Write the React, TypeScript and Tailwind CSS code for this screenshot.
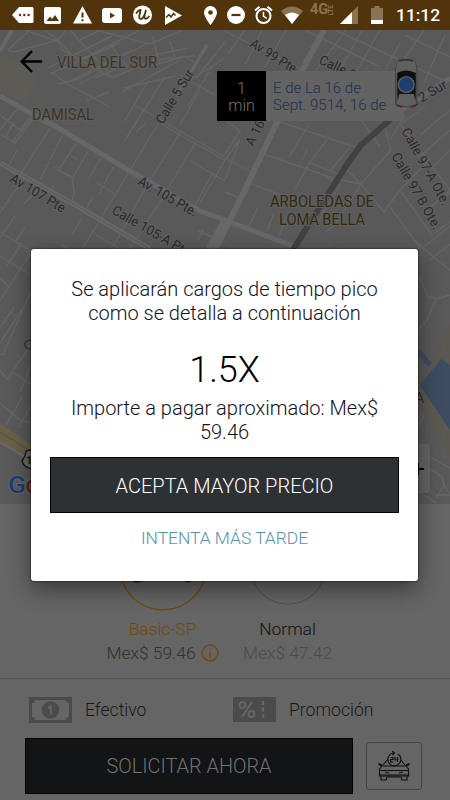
import type { ReactNode } from 'react';

const minorRoads = [
  // upper left
  'M25 30 L60 42 L72 55 L112 78 L135 68 L152 60 L195 56',
  'M45 30 L58 40 L66 30',
  'M30 30 L10 48 L8 51 L14 52 L58 40',
  'M58 40 L62 50 L112 78',
  'M70 30 L112 77',
  'M48 68 L112 36 M72 55 L62 67 M50 74 L120 43',
  'M80 60 L140 30 M100 30 L80 40',
  'M96 30 L150 44 L182 30 M110 44 L128 68',
  'M152 36 L160 64 M170 41 L175 58',
  'M52 72 L66 83 L132 50 M66 83 L110 107',
  'M59 84 L78 79 L150 42 M78 85 L100 73 M86 101 L109 92 M95 78 L118 68',
  'M145 68 L185 56 L194 62 M150 56 L188 48',
  'M124 88 L176 76 M148 81 L124 122 M165 77 L125 140 M122 92 L180 60',
  'M135 105 L225 157 M180 75 L225 101 M190 80 L225 58 M200 90 L180 125',
  'M225 42 L196 78 M213 65 L188 106 M158 122 L180 135 L225 160',
  'M0 115 L20 130 L32 114 M6 137 L14 122 M0 134 L15 143 L34 118',
  'M18 108 L0 130 M35 114 L12 142 M10 100 L60 128',
  'M50 128 L20 175 M62 136 L40 180 M76 144 L58 170 L72 178 L74 192 L72 202',
  'M70 155 L77 159 M88 151 L73 178 M101 158 L88 180 M114 166 L104 184',
  'M53 167 L72 177 M97 183 L115 194 M103 186 L99 194',
  'M158 124 L130 170 L100 220 L82 249 M180 133 L148 183 L118 238 M196 142 L164 195 L130 249',
  'M146 123 L136 132 M190 161 L225 181 M212 174 L192 211 M225 160 L200 203',
  'M0 232 L16 242 L40 256 M17 150 L9 165 M27 173 L0 213 M53 186 L48 196 M37 190 L24 204',
  'M15 216 L0 238 M25 227 L15 242 M93 197 L85 211 M82 218 L72 234',
  'M96 235 L140 260 M100 221 L200 276 M115 244 L120 234 M198 231 L225 242 M203 229 L198 240 M62 245 L72 250',
  // upper right
  'M245 30 L228 54 M262 30 L245 65 M286 30 L265 67 M346 30 L315 72 M362 30 L340 70 M380 30 L355 74',
  'M225 31 L308 73 M305 30 L380 67 M335 30 L445 81 M405 35 L450 57 M424 30 L405 58 M445 35 L424 83 M400 43 L385 70',
  'M405 115 L390 140 M425 106 L400 125 M450 110 L420 135 M450 130 L418 158',
  'M225 120 L240 131 L225 154 M239 140 L225 160 M225 158 L250 171 M240 139 L225 180 M258 152 L336 179 L361 184',
  'M252 184 L325 212 M250 185 L245 195 M225 192 L240 198 M278 121 L355 147 M308 126 L289 157 M307 150 L303 159',
  'M330 136 L310 162 L295 190 M350 147 L330 171 M310 163 L338 174 M325 176 L340 185 L318 222 M258 207 L249 227 M274 213 L267 231 M286 217 L279 237',
  'M385 128 L391 150 L361 184 L384 212 L400 190 L431 158 M400 190 L432 235 M390 207 L421 249 L450 226 M432 235 L450 222',
  'M347 170 L361 184 L335 225 L325 232 M450 190 L425 212 M440 205 L450 192 M400 124 L450 190 M450 150 L425 175',
  'M361 120 L380 147 M370 138 L392 122',
  // strip left of the dialog
  'M0 256 L31 275 M0 278 L8 286 M31 252 L0 301 M22 243 L6 267 M14 308 L0 327',
  'M31 291 L3 355 L0 353 M22 309 L0 343 M0 370 L7 379 L31 345 M12 372 L31 384 M22 397 L6 425 M31 365 L20 392 M0 403 L20 420 L31 423 M31 405 L18 428',
  // strip right of the dialog
  'M414 240 L437 260 L450 270 M450 244 L430 260 M419 275 L428 297 L436 299 L450 295 M436 299 L427 320 L418 330 M424 415 L418 428',
  'M430 457 L450 468 M430 469 L442 477 L444 485 L436 499 M444 485 L450 494 M436 495 L450 495 M419 492 L436 503',
];

const majorRoads = [
  { d: 'M12 30 L0 51', w: 4 },
  { d: 'M0 96 L50 124', w: 5 },
  { d: 'M40 117 L130 171 L200 211 L225 220 L293 246', w: 5 },
  { d: 'M225 220 L205 255', w: 6 },
  { d: 'M324 30 L295 83 L278 120 L252 175 L228 224 L212 255', w: 6 },
  { d: 'M207 45 L180 90', w: 3 },
  { d: 'M450 78 L398 112', w: 5 },
  { d: 'M0 163 L77 206 L150 249', w: 5 },
];

const placeLabels = [
  { text: 'VILLA DEL SUR', x: 57, y: 68, w: 100, color: '#3d331f' },
  { text: 'DAMISAL', x: 32, y: 120, w: 62, color: '#3d331f' },
  { text: 'ARBOLEDAS DE', x: 270, y: 207, w: 104, color: '#33290f' },
  { text: 'LOMA BELLA', x: 279, y: 225, w: 86, color: '#33290f' },
];

const streetLabels = [
  { text: 'Calle 5 Sur', x: 163, y: 125, w: 61, angle: -59 },
  { text: 'Av 99 Pte', x: 249, y: 46, w: 52, angle: 32 },
  { text: 'Calle 9 Sur', x: 318, y: 63, w: 62, angle: 26 },
  { text: 'A 16', x: 253, y: 147, w: 27, angle: -63 },
  { text: '. 2 Sur', x: 416, y: 106, w: 37, angle: -30 },
  { text: 'Av 107 Pte', x: 9, y: 181, w: 62, angle: 31 },
  { text: 'Av. 105 Pte.', x: 137, y: 184, w: 66, angle: 30 },
  { text: 'Calle 105-A Pte', x: 111, y: 213, w: 88, angle: 30 },
  { text: 'Calle 97-A Ote.', x: 401, y: 131, w: 86, angle: 61 },
  { text: 'Calle 97 B Ote.', x: 391, y: 156, w: 86, angle: 60 },
];

function CityMap() {
  return (
    <svg className="block" width="450" height="474" viewBox="0 30 450 474" fontFamily="Roboto, sans-serif">
      <rect y="30" width="450" height="474" fill="#595959" />
      <path d="M0 52 L40 76 L25 104 L0 92 Z" fill="#5c5b56" />
      <path d="M450 325 L428 366 L419 377 L419 405 L450 455 Z" fill="#5b5751" />
      <g fill="none" stroke="#656565" strokeWidth="1.4">
        {minorRoads.map((d) => (
          <path key={d} d={d} />
        ))}
      </g>
      <g fill="none" stroke="#676767">
        {majorRoads.map((r) => (
          <path key={r.d} d={r.d} strokeWidth={r.w} />
        ))}
      </g>
      <path d="M0 163 L77 206 L150 249" stroke="#595959" fill="none" />
      <path d="M391 119 L361 145 L348 163 L316 213 L291 253" stroke="#414141" strokeWidth="6" fill="none" />
      <path d="M318 227 L332 237 L338 249" stroke="#4a5669" fill="none" />
      {/* highway */}
      <path d="M0 423 L32 445 L32 460 L0 441 Z" fill="#686047" />
      <path d="M0 432 L32 452" stroke="#535046" fill="none" />
      <path d="M0 442 L32 461" stroke="#6a6a68" strokeWidth="2" fill="none" />
      {/* water */}
      <path d="M420 385 L441 359 L450 365 L450 430 Z" fill="#3d4c61" />
      <path d="M418 351 L430 365" stroke="#3d4c61" strokeWidth="5" />
      <g fontSize="16">
        {placeLabels.map((l) => (
          <text key={l.text} x={l.x} y={l.y} textLength={l.w} lengthAdjust="spacingAndGlyphs" fill={l.color} stroke="#606060" strokeWidth="2" paintOrder="stroke">
            {l.text}
          </text>
        ))}
      </g>
      <g fontSize="13.5" fill="#292929" stroke="#606060" strokeWidth="2" paintOrder="stroke">
        {streetLabels.map((l) => (
          <text key={l.text} transform={`translate(${l.x} ${l.y}) rotate(${l.angle})`} textLength={l.w} lengthAdjust="spacingAndGlyphs">
            {l.text}
          </text>
        ))}
        <text x="414.500" y="403" fontSize="15" fill="#302817">A</text>
      </g>
      <path d="M33 340 Q23 340 25 346 Q28 351 34 348" stroke="#252525" fill="none" />
      {/* route shield */}
      <path d="M34 449 L26 451 L25 456 L22 461 Q24 468 33 469" fill="#676767" stroke="#171717" strokeWidth="1.4" />
      <text x="26" y="464" fontSize="11" fontWeight="700" fill="#161616">1</text>
      <text x="8" y="493" fontSize="23" fontWeight="500" stroke="#6b6b6b" strokeWidth="1.5" paintOrder="stroke">
        <tspan fill="#1b3c70" textLength="18" lengthAdjust="spacingAndGlyphs">G</tspan>
        <tspan x="25.500" fill="#6d1b15">o</tspan>
      </text>
    </svg>
  );
}

function TopCar() {
  return (
    <svg className="absolute left-[394px] top-[27px]" width="25" height="54" viewBox="0 0 25 54">
      <path d="M4 2 Q12 0 20 2 L23.500 10 L23.500 48 Q13 53 1 48 L1 12 Z" fill="#1b1b1b" fillOpacity=".4" />
      <path d="M5 2 Q12 0 19 2 Q22 5 22.500 14 L22 47 Q12 51 3 47 L2 14 Q2.500 5 5 2 Z" fill="#5f605f" />
      <path d="M5 4 Q12 1.500 19 4" stroke="#2e2e2e" strokeWidth="1.500" fill="none" />
      <path d="M3 16 Q12 11 22 16 L20.500 23 L4.500 23 Z" fill="#0c0f12" />
      <path d="M3 18 L5.500 24 L5.500 36 L3.500 44 Z M22 18 L19.500 24 L19.500 36 L21.500 44 Z" fill="#101315" />
      <path d="M5 33 H20 L20.500 37 H4.500 Z" fill="#15181a" />
      <path d="M3 48.500 L8 50 M17 50 L22 48.500" stroke="#681c24" strokeWidth="1.500" />
      <circle cx="12.200" cy="27.500" r="8.600" fill="#5c6066" />
      <circle cx="12.200" cy="27.500" r="7.200" fill="#1c3f70" />
    </svg>
  );
}

function StatusBar() {
  return (
    <header className="flex h-[30px] shrink-0 items-center bg-[#52340c] text-white">
      <svg className="ml-3" width="22" height="18" viewBox="0 0 22 18">
        <path d="M7 1 H20 Q21.500 1 21.500 2.500 V15.500 Q21.500 17 20 17 H7 L0 9 Z" fill="#fff" />
        <g fill="#52340c"><circle cx="8" cy="9" r="1.200" /><circle cx="12.300" cy="9" r="1.200" /><circle cx="16.600" cy="9" r="1.200" /></g>
      </svg>
      <svg className="ml-[10px]" width="17" height="17" viewBox="0 0 17 17">
        <rect width="17" height="17" rx="2" fill="#fff" />
        <path d="M2.500 14 L6 9.500 L8 12 L11 8 L15 14 Z" fill="#52340c" />
      </svg>
      <svg className="ml-3" width="19" height="18" viewBox="0 0 19 18">
        <path d="M9.500 0 L19 17.500 H0 Z" fill="#fff" />
        <path d="M9.500 6.500 V11.500 M9.500 13.200 V15.200" stroke="#52340c" strokeWidth="2" />
      </svg>
      <svg className="ml-[10px]" width="20" height="15" viewBox="0 0 20 15">
        <rect width="20" height="15" rx="3" fill="#fff" />
        <path d="M8 4.500 L13 7.500 L8 10.500 Z" fill="#52340c" />
      </svg>
      <svg className="ml-[11px]" width="19" height="20" viewBox="0 0 19 20">
        <circle cx="9.500" cy="10" r="9.500" fill="#fff" />
        <path d="M3 8.500 Q5.500 5 7.500 5 Q7.500 7 6.300 10.500 Q5.800 14.500 8.500 14 Q11.500 12 13 5 Q11.200 11 11.500 13.200 Q13.500 15 16.300 11" fill="none" stroke="#52340c" strokeWidth="1.800" />
      </svg>
      <svg className="ml-3" width="18" height="19" viewBox="0 0 18 19">
        <path d="M1 0 L18 9.500 L1 19 Z" fill="#fff" />
        <path d="M2 11.500 L5 8.500 L7 11 L9.500 7.500 L11.500 9.500" fill="none" stroke="#52340c" strokeWidth="1.500" />
      </svg>
      <svg className="ml-[22px]" width="13" height="19" viewBox="0 0 13 19">
        <path d="M6.500 0 A6.500 6.500 0 0 1 13 6.500 C13 11 6.500 19 6.500 19 C6.500 19 0 11 0 6.500 A6.500 6.500 0 0 1 6.500 0 Z" fill="#fff" />
        <circle cx="6.500" cy="6.500" r="2.300" fill="#52340c" />
      </svg>
      <svg className="ml-[10px]" width="18" height="18" viewBox="0 0 18 18">
        <circle cx="9" cy="9" r="9" fill="#fff" />
        <path d="M4.500 9 H13.500" stroke="#52340c" strokeWidth="2.200" />
      </svg>
      <svg className="ml-[9px]" width="19" height="18" viewBox="0 0 19 18" fill="none" stroke="#fff">
        <circle cx="9.500" cy="10" r="7" strokeWidth="2" />
        <path d="M9.500 5.800 V10.300 L12.800 12.300" strokeWidth="1.500" />
        <path d="M1 4.500 L5.500 .8 M13.500 .8 L18 4.500" strokeWidth="2" />
      </svg>
      <svg className="ml-2" width="22" height="18" viewBox="0 0 22 18">
        <path d="M0 5 Q11 -4 22 5 L11 18 Z" fill="#8a7352" />
        <path d="M4 9 Q11 4 18 9 L11 18 Z" fill="#fff" />
      </svg>
      <span className="mb-[10px] ml-[7px] w-[18px] font-[Roboto,sans-serif] text-[14.500px] leading-none font-bold text-[#8a7352]">4G</span>
      <span className="mb-[10px] flex h-[11px] w-[7px] items-center justify-center">
        <span className="-rotate-90 font-[Roboto,sans-serif] text-[6.500px] leading-none font-bold text-[#8a7352]">LTE</span>
      </span>
      <svg className="ml-[5px]" width="18" height="18" viewBox="0 0 18 18">
        <path d="M0 18 L18 0 V18 Z" fill="#8a7352" />
        <path d="M0 18 L12 6 V18 Z" fill="#fff" />
      </svg>
      <svg className="ml-[13px]" width="12" height="18" viewBox="0 0 12 18">
        <path d="M3.500 0 H8.500 V2 H12 V18 H0 V2 H3.500 Z" fill="#8a7352" />
        <path d="M0 14 H12 V18 H0 Z" fill="#fff" />
      </svg>
      <span className="ml-[13px] pt-px font-[Roboto,sans-serif] text-[17.400px] leading-none font-medium">11:12</span>
    </header>
  );
}

function RideOption({ name, price, nameColor, priceColor, children }: { name: string; price: ReactNode; nameColor: string; priceColor: string; children: ReactNode }) {
  return (
    <div className="flex w-[125px] flex-col items-center">
      <div className="flex h-[90px] items-center justify-center">{children}</div>
      <span className={`mt-[5px] text-[17.400px] leading-6 ${nameColor}`}>{name}</span>
      <span className={`flex items-center text-[17.400px] leading-6 whitespace-nowrap ${priceColor}`}>{price}</span>
    </div>
  );
}

function BookingPanel() {
  return (
    <section className="flex h-[296px] flex-col bg-[#656565] font-light">
      <div className="flex h-[175px] border-b border-[#555] pt-[18px] pl-[100px]">
        <RideOption
          name="Basic-SP"
          nameColor="text-[#70480a]"
          priceColor="text-[#303030]"
          price={
            <>
              Mex$ 59.46
              <svg className="ml-[5px]" width="18" height="18" viewBox="0 0 18 18" fill="none" stroke="#75490a">
                <circle cx="9" cy="9" r="7.900" strokeWidth="1.500" />
                <path d="M9 7.500 V13.500 M9 4.500 V6" strokeWidth="1.500" />
              </svg>
            </>
          }
        >
          <svg width="90" height="90" viewBox="0 0 90 90" fill="none">
            <circle cx="45" cy="44.500" r="43.300" stroke="#70480a" strokeWidth="1.300" />
            <ellipse cx="19" cy="57.500" rx="4.500" ry="3" fill="#151515" />
            <ellipse cx="70" cy="57.500" rx="4" ry="2.700" fill="#151515" />
          </svg>
        </RideOption>
        <RideOption name="Normal" price="Mex$ 47.42" nameColor="text-[#111]" priceColor="text-[#4b4b4b]">
          <svg width="76" height="76" viewBox="0 0 76 76" fill="none">
            <circle cx="38" cy="38" r="37.200" stroke="#505050" />
          </svg>
        </RideOption>
      </div>
      <div className="flex h-[59px] items-center pt-[3px] text-[17.600px] text-[#181818]">
        <div className="flex w-[204px] items-center pl-[29px]">
          <svg width="43" height="26" viewBox="0 0 43 26">
            <rect width="43" height="26" fill="#4b4b4b" />
            <path d="M6 3 H37 Q37 6 40 6 V20 Q37 20 37 23 H6 Q6 20 3 20 V6 Q6 6 6 3 Z" fill="#656565" />
            <circle cx="21.500" cy="13" r="8.700" fill="#4b4b4b" />
            <path d="M19 11.500 L21.800 9 V17.500" fill="none" stroke="#656565" strokeWidth="1.800" />
          </svg>
          <span className="ml-[13px]">Efectivo</span>
        </div>
        <div className="flex items-center pl-[29px]">
          <svg width="43" height="25" viewBox="0 0 43 25">
            <rect width="43" height="25" fill="#4b4b4b" />
            <g fill="none" stroke="#656565" strokeWidth="2">
              <circle cx="9.500" cy="8" r="2.900" />
              <circle cx="18.500" cy="17" r="2.900" />
              <path d="M19 5 L9 20" />
              <path d="M30 4 V21" strokeWidth="2.500" strokeDasharray="4 2.500" />
            </g>
          </svg>
          <span className="ml-[13px]">Promoción</span>
        </div>
      </div>
      <div className="flex h-[56px] items-center pl-[25px]">
        <button className="h-[56px] w-[328px] border border-black bg-[#121415] pt-[2px] text-[19.900px] text-[#727272]">SOLICITAR AHORA</button>
        <button className="ml-[13px] flex h-[48px] w-[56px] items-center justify-center rounded-[3px] border border-[#464646]">
          <svg width="32" height="30" viewBox="0 0 32 30" fill="none" stroke="#111" strokeWidth="1.100">
            <path d="M10 8 L5 14 L1.500 18 V25 H30.500 V18 L27 14 L22 8" />
            <path d="M5 15 H27 M1.500 19.500 H30.500 M2 24 H30" />
            <path d="M4 14 L1 12.500 Q0 14 4 15 M28 14 L31 12.500 Q32 14 28 15" />
            <path d="M3 25 V29 H8 L9 26 H23 L24 29 H29 V25 M7 21 L11 22 M25 21 L21 22" />
            <path d="M20 3 A6.500 6.500 0 1 1 11.500 4 Q13 2.300 16 2 M14 0 L16.500 2 L14.500 4" />
            <path d="M12.500 6.500 H15 V8.500 H12.700 V11 H15.300 M17 6 V9 H20 M19.500 6 V11" strokeWidth="1.200" />
          </svg>
        </button>
      </div>
    </section>
  );
}

function SurgeDialog() {
  return (
    <div className="absolute top-[249px] left-[31px] flex h-[332px] w-[387px] flex-col items-center rounded-[3px] bg-white text-center font-light text-[#11111f] shadow-[0_8px_22px_rgba(0,0,0,0.45),0_0_2px_#000]">
      <p className="mt-7 text-[20px] leading-6">
        Se aplicarán cargos de tiempo pico
        <br />
        como se detalla a continuación
      </p>
      <p className="mt-[23px] text-[36px] leading-[44px] text-black">1.5X</p>
      <p className="mt-1 text-[20px] leading-6">
        Importe a pagar aproximado: Mex$
        <br />
        59.46
      </p>
      <button className="mt-[13px] h-[56px] w-[349px] border border-black bg-[#2d3133] pt-[2px] text-[20px] text-white">ACEPTA MAYOR PRECIO</button>
      <button className="mt-[13px] text-[17.400px] leading-6 text-[#5790ad]">INTENTA MÁS TARDE</button>
    </div>
  );
}

export default function App() {
  return (
    <main className="relative flex h-[800px] w-[450px] flex-col overflow-hidden bg-[#656565] font-[Roboto,sans-serif]">
      <StatusBar />
      <div className="relative h-[474px] shrink-0">
        <CityMap />
        <svg className="absolute top-[20px] left-[20px]" width="23" height="23" viewBox="0 0 23 23" fill="none" stroke="#000" strokeWidth="2.500">
          <path d="M22 11.500 H2 M12 1 L1.800 11.500 L12 22" />
        </svg>
        {/* pickup eta */}
        <div className="absolute top-[41px] left-[217px] flex h-[50px] w-[187px] font-light">
          <div className="flex w-[49px] flex-col items-center justify-center bg-black pt-[2px] text-[16px] leading-[17px] text-[#777]">
            <span>1</span>
            <span>min</span>
          </div>
          <div className="flex flex-1 items-center bg-[#636363] pt-[2px] pl-[7px] text-[15px] leading-[17.500px] whitespace-nowrap text-[#1b304f]">
            E de La 16 de
            <br />
            Sept. 9514, 16 de
          </div>
        </div>
        <TopCar />
        <button className="absolute top-[414px] left-[381px] h-[49px] w-[49px] rounded-[3px] bg-[#646464] shadow">
          <svg className="ml-[25px]" width="18" height="18" viewBox="0 0 18 18">
            <path d="M0 9 H18 M12 3 V15" stroke="#000" strokeWidth="2" />
          </svg>
        </button>
      </div>
      <BookingPanel />
      <SurgeDialog />
    </main>
  );
}
